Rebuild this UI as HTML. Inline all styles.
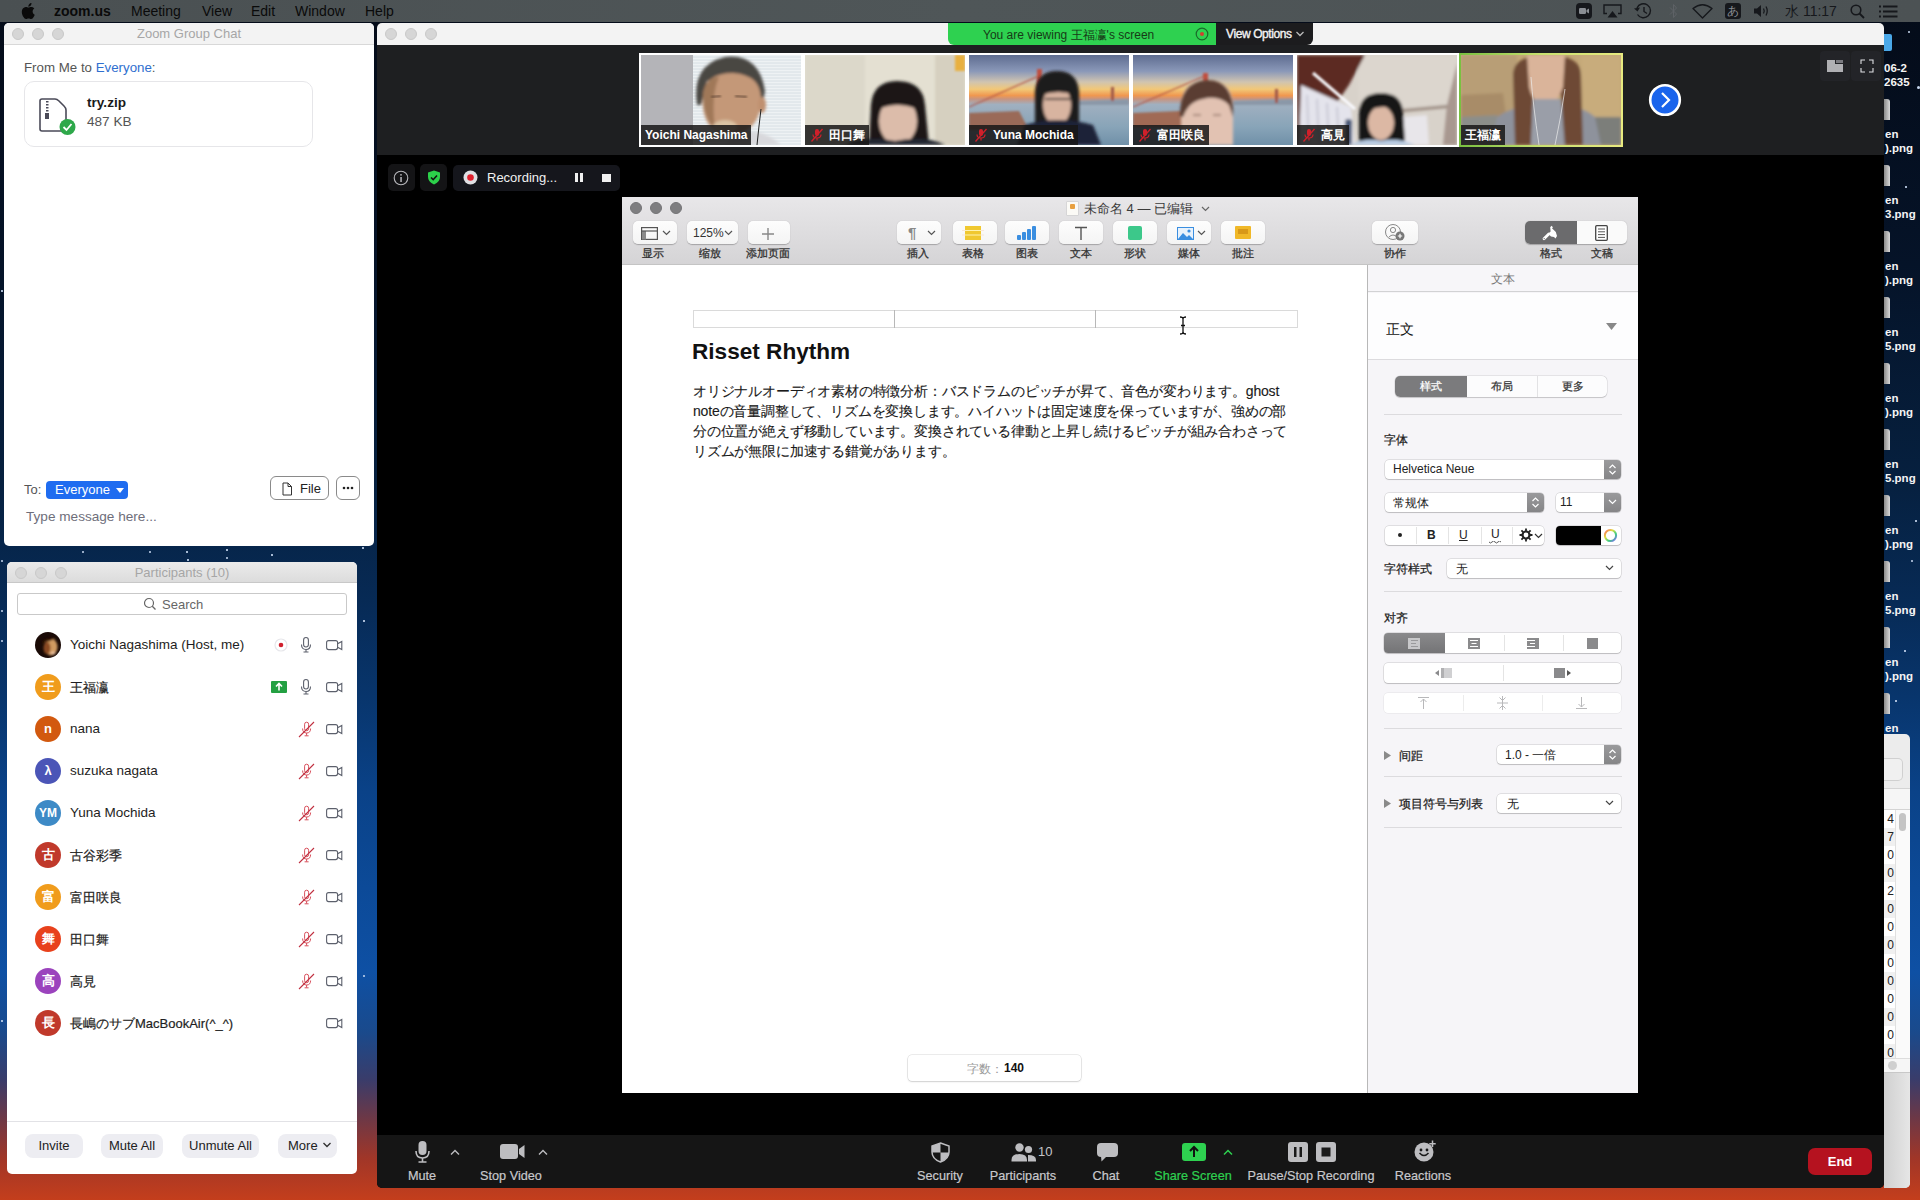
<!DOCTYPE html>
<html lang="ja">
<head>
<meta charset="utf-8">
<style>
*{box-sizing:border-box;margin:0;padding:0}
html,body{width:1920px;height:1200px;overflow:hidden}
body{position:relative;font-family:"Liberation Sans",sans-serif;background:#0a1e3c}
.abs{position:absolute}
#wall{position:absolute;left:0;top:0;width:1920px;height:1200px;
 background:linear-gradient(180deg,#040b18 0%,#051328 22%,#06203f 40%,#072a55 50%,#08356c 58%,#0a4288 66%,#0c4a98 74%,#0e50a4 81%,#1a4a8c 86%,#3a3c6a 90%,#6a3848 93%,#a03628 96.5%,#c43e1c 100%)}
#menubar{position:absolute;left:0;top:0;width:1920px;height:22px;background:linear-gradient(90deg,#4a5052,#4f5658 50%,#4c5254);color:#0a0a0a;font-size:14px}
#menubar span{position:absolute;top:3px}
.win{position:absolute;background:#fff;border-radius:5px;overflow:hidden}
.tl{position:absolute;width:12px;height:12px;border-radius:50%;background:#d6d6d6;border:0.5px solid #c8c8c8}
.ttl{position:absolute;left:0;right:0;text-align:center;color:#a6a6a6;font-size:13px}
.pbtn{height:24px;background:#ededf2;border-radius:8px;font-size:13px;color:#222;text-align:center;line-height:24px}
.av{position:absolute;left:28px;width:26px;height:26px;border-radius:50%;color:#fff;text-align:center;line-height:26px;font-size:13px;font-weight:bold}
.pn{position:absolute;left:63px;font-size:13.5px;color:#1e1e22}
.th{position:absolute;top:55px;width:160px;height:90px;overflow:hidden}
.th .lb{position:absolute;left:0;bottom:0;height:20px;background:rgba(24,22,22,0.85);color:#fff;font-size:12px;line-height:20px;padding:0 4px 0 4px;font-weight:bold;white-space:nowrap}
.th .sh{position:absolute;border-radius:50%}
.mm{display:inline-block;width:14px;height:14px;vertical-align:-3px;margin-right:5px;margin-left:1px}
.tb{position:absolute;color:#c8c8cc;font-size:12.7px;text-align:center;white-space:nowrap;-webkit-text-stroke:0.2px currentColor}
.pb{position:absolute;top:221px;height:23px;background:linear-gradient(#fdfdfd,#f4f4f4);border-radius:5px;box-shadow:0 0.5px 1px rgba(0,0,0,0.25)}
.pl{position:absolute;top:246px;font-size:11px;color:#333;text-align:center;width:60px;-webkit-text-stroke:0.3px #333}
.sep{position:absolute;left:1384px;width:238px;height:1px;background:#dcdbde}
.sl{position:absolute;font-size:12px;color:#1e1e1e;-webkit-text-stroke:0.25px #1e1e1e}
.pop{position:absolute;background:#fff;border-radius:4px;box-shadow:0 0 0 0.5px rgba(0,0,0,0.18),0 1px 1px rgba(0,0,0,0.15)}
.stp{position:absolute;top:0;right:0;width:17px;height:100%;background:linear-gradient(#9a9a9c,#858587);border-radius:0 4px 4px 0}
</style>
</head>
<body>
<div id="wall"></div>
<div class="abs" style="left:82px;top:551px;width:2px;height:2px;background:#c8d8f0;border-radius:50%"></div><div class="abs" style="left:149px;top:551px;width:2px;height:2px;background:#c8d8f0;border-radius:50%"></div><div class="abs" style="left:186px;top:551px;width:1.5px;height:1.5px;background:#c8d8f0;border-radius:50%"></div><div class="abs" style="left:226px;top:549px;width:1.5px;height:1.5px;background:#c8d8f0;border-radius:50%"></div><div class="abs" style="left:271px;top:554px;width:1.5px;height:1.5px;background:#c8d8f0;border-radius:50%"></div><div class="abs" style="left:187px;top:559px;width:1.5px;height:1.5px;background:#c8d8f0;border-radius:50%"></div><div class="abs" style="left:226px;top:557px;width:2px;height:2px;background:#c8d8f0;border-radius:50%"></div><div class="abs" style="left:362px;top:547px;width:1.5px;height:1.5px;background:#c8d8f0;border-radius:50%"></div><div class="abs" style="left:1px;top:290px;width:1.5px;height:1.5px;background:#c8d8f0;border-radius:50%"></div><div class="abs" style="left:1px;top:560px;width:2px;height:2px;background:#c8d8f0;border-radius:50%"></div><div class="abs" style="left:1px;top:610px;width:2px;height:2px;background:#c8d8f0;border-radius:50%"></div><div class="abs" style="left:1px;top:640px;width:2px;height:2px;background:#c8d8f0;border-radius:50%"></div><div class="abs" style="left:1908px;top:31px;width:2px;height:2px;background:#c8d8f0;border-radius:50%"></div><div class="abs" style="left:1917px;top:86px;width:3px;height:3px;background:#c8d8f0;border-radius:50%"></div><div class="abs" style="left:1905px;top:186px;width:1.5px;height:1.5px;background:#c8d8f0;border-radius:50%"></div><div class="abs" style="left:1915px;top:520px;width:1.5px;height:1.5px;background:#c8d8f0;border-radius:50%"></div><div class="abs" style="left:1911px;top:560px;width:2px;height:2px;background:#c8d8f0;border-radius:50%"></div><div class="abs" style="left:1913px;top:610px;width:1.5px;height:1.5px;background:#c8d8f0;border-radius:50%"></div><div class="abs" style="left:1904px;top:650px;width:1.5px;height:1.5px;background:#c8d8f0;border-radius:50%"></div><div class="abs" style="left:1895px;top:700px;width:1.5px;height:1.5px;background:#c8d8f0;border-radius:50%"></div><div class="abs" style="left:363px;top:975px;width:2px;height:2px;background:#c8d8f0;border-radius:50%"></div><div class="abs" style="left:363px;top:620px;width:1.5px;height:1.5px;background:#c8d8f0;border-radius:50%"></div><div class="abs" style="left:1px;top:1020px;width:1.5px;height:1.5px;background:#c8d8f0;border-radius:50%"></div>
<svg width="0" height="0" style="position:absolute"><defs>
<filter id="bl" x="-20%" y="-20%" width="140%" height="140%"><feGaussianBlur stdDeviation="1.6"/></filter>
<filter id="bl2" x="-20%" y="-20%" width="140%" height="140%"><feGaussianBlur stdDeviation="0.8"/></filter>
<linearGradient id="sky" x1="0" y1="0" x2="0" y2="1"><stop offset="0" stop-color="#5e6c90"/><stop offset="0.18" stop-color="#8a98b8"/><stop offset="0.3" stop-color="#d0c4b0"/><stop offset="0.38" stop-color="#f2c878"/><stop offset="0.45" stop-color="#f09850"/><stop offset="0.49" stop-color="#c89480"/><stop offset="0.55" stop-color="#a0b0c0"/><stop offset="0.8" stop-color="#88a4b8"/><stop offset="1" stop-color="#7090a8"/></linearGradient>
</defs></svg>


<div class="abs" style="left:1884px;top:34px;width:8px;height:17px;background:#4aa8e8;border-radius:0 2px 2px 0"></div>
<div class="abs" style="left:1884px;top:61px;font-size:11.5px;font-weight:bold;color:#f4f4f4;line-height:14px;white-space:nowrap">06-2<br>2635</div>
<div class="abs" style="left:1884px;top:99px;width:6px;height:21px;background:linear-gradient(90deg,#8a8a8a,#d8d8d8);border-radius:0 3px 0 0"></div>
<div class="abs" style="left:1885px;top:127px;font-size:11.5px;font-weight:bold;color:#f4f4f4;line-height:14px;white-space:nowrap">en<br>).png</div>
<div class="abs" style="left:1884px;top:165px;width:6px;height:21px;background:linear-gradient(90deg,#8a8a8a,#d8d8d8);border-radius:0 3px 0 0"></div>
<div class="abs" style="left:1885px;top:193px;font-size:11.5px;font-weight:bold;color:#f4f4f4;line-height:14px;white-space:nowrap">en<br>3.png</div>
<div class="abs" style="left:1884px;top:231px;width:6px;height:21px;background:linear-gradient(90deg,#8a8a8a,#d8d8d8);border-radius:0 3px 0 0"></div>
<div class="abs" style="left:1885px;top:259px;font-size:11.5px;font-weight:bold;color:#f4f4f4;line-height:14px;white-space:nowrap">en<br>).png</div>
<div class="abs" style="left:1884px;top:297px;width:6px;height:21px;background:linear-gradient(90deg,#8a8a8a,#d8d8d8);border-radius:0 3px 0 0"></div>
<div class="abs" style="left:1885px;top:325px;font-size:11.5px;font-weight:bold;color:#f4f4f4;line-height:14px;white-space:nowrap">en<br>5.png</div>
<div class="abs" style="left:1884px;top:363px;width:6px;height:21px;background:linear-gradient(90deg,#8a8a8a,#d8d8d8);border-radius:0 3px 0 0"></div>
<div class="abs" style="left:1885px;top:391px;font-size:11.5px;font-weight:bold;color:#f4f4f4;line-height:14px;white-space:nowrap">en<br>).png</div>
<div class="abs" style="left:1884px;top:429px;width:6px;height:21px;background:linear-gradient(90deg,#8a8a8a,#d8d8d8);border-radius:0 3px 0 0"></div>
<div class="abs" style="left:1885px;top:457px;font-size:11.5px;font-weight:bold;color:#f4f4f4;line-height:14px;white-space:nowrap">en<br>5.png</div>
<div class="abs" style="left:1884px;top:495px;width:6px;height:21px;background:linear-gradient(90deg,#8a8a8a,#d8d8d8);border-radius:0 3px 0 0"></div>
<div class="abs" style="left:1885px;top:523px;font-size:11.5px;font-weight:bold;color:#f4f4f4;line-height:14px;white-space:nowrap">en<br>).png</div>
<div class="abs" style="left:1884px;top:561px;width:6px;height:21px;background:linear-gradient(90deg,#8a8a8a,#d8d8d8);border-radius:0 3px 0 0"></div>
<div class="abs" style="left:1885px;top:589px;font-size:11.5px;font-weight:bold;color:#f4f4f4;line-height:14px;white-space:nowrap">en<br>5.png</div>
<div class="abs" style="left:1884px;top:627px;width:6px;height:21px;background:linear-gradient(90deg,#8a8a8a,#d8d8d8);border-radius:0 3px 0 0"></div>
<div class="abs" style="left:1885px;top:655px;font-size:11.5px;font-weight:bold;color:#f4f4f4;line-height:14px;white-space:nowrap">en<br>).png</div>
<div class="abs" style="left:1884px;top:693px;width:6px;height:21px;background:linear-gradient(90deg,#8a8a8a,#d8d8d8);border-radius:0 3px 0 0"></div>
<div class="abs" style="left:1885px;top:721px;font-size:11.5px;font-weight:bold;color:#f4f4f4;line-height:14px;white-space:nowrap">en<br></div>
<div class="abs" style="left:1884px;top:734px;width:26px;height:454px;background:#ececec;border-radius:0 5px 5px 0;overflow:hidden"><div class="abs" style="left:0;top:24px;width:19px;height:23px;border:1px solid #d0d0d0;border-left:none;border-radius:0 5px 5px 0;background:#f0f0f0"></div><div class="abs" style="left:0;top:54px;width:26px;height:1px;background:#d4d4d4"></div><div class="abs" style="left:0;top:55px;width:26px;height:21px;background:#f6f6f6;border-bottom:1px solid #d4d4d4"></div><div class="abs" style="left:0;top:76px;width:11px;height:18px;background:#fff;font-size:12px;color:#222;line-height:18px;text-align:right;padding-right:1px">4</div><div class="abs" style="left:0;top:94px;width:11px;height:18px;background:#f0f0f0;font-size:12px;color:#222;line-height:18px;text-align:right;padding-right:1px">7</div><div class="abs" style="left:0;top:112px;width:11px;height:18px;background:#fff;font-size:12px;color:#222;line-height:18px;text-align:right;padding-right:1px">0</div><div class="abs" style="left:0;top:130px;width:11px;height:18px;background:#f0f0f0;font-size:12px;color:#222;line-height:18px;text-align:right;padding-right:1px">0</div><div class="abs" style="left:0;top:148px;width:11px;height:18px;background:#fff;font-size:12px;color:#222;line-height:18px;text-align:right;padding-right:1px">2</div><div class="abs" style="left:0;top:166px;width:11px;height:18px;background:#f0f0f0;font-size:12px;color:#222;line-height:18px;text-align:right;padding-right:1px">0</div><div class="abs" style="left:0;top:184px;width:11px;height:18px;background:#fff;font-size:12px;color:#222;line-height:18px;text-align:right;padding-right:1px">0</div><div class="abs" style="left:0;top:202px;width:11px;height:18px;background:#f0f0f0;font-size:12px;color:#222;line-height:18px;text-align:right;padding-right:1px">0</div><div class="abs" style="left:0;top:220px;width:11px;height:18px;background:#fff;font-size:12px;color:#222;line-height:18px;text-align:right;padding-right:1px">0</div><div class="abs" style="left:0;top:238px;width:11px;height:18px;background:#f0f0f0;font-size:12px;color:#222;line-height:18px;text-align:right;padding-right:1px">0</div><div class="abs" style="left:0;top:256px;width:11px;height:18px;background:#fff;font-size:12px;color:#222;line-height:18px;text-align:right;padding-right:1px">0</div><div class="abs" style="left:0;top:274px;width:11px;height:18px;background:#f0f0f0;font-size:12px;color:#222;line-height:18px;text-align:right;padding-right:1px">0</div><div class="abs" style="left:0;top:292px;width:11px;height:18px;background:#fff;font-size:12px;color:#222;line-height:18px;text-align:right;padding-right:1px">0</div><div class="abs" style="left:0;top:310px;width:11px;height:18px;background:#f0f0f0;font-size:12px;color:#222;line-height:18px;text-align:right;padding-right:1px">0</div><div class="abs" style="left:11px;top:76px;width:15px;height:248px;background:#fafafa;border-left:1px solid #e0e0e0"></div><div class="abs" style="left:15px;top:79px;width:7px;height:18px;background:#c4c4c4;border-radius:4px"></div><div class="abs" style="left:0;top:324px;width:26px;height:15px;background:#f6f6f6;border-top:1px solid #ddd;border-bottom:1px solid #c8c8c8"></div><div class="abs" style="left:4px;top:327px;width:9px;height:9px;border-radius:50%;background:#cfcfcf"></div><div class="abs" style="left:0;top:339px;width:26px;height:115px;background:linear-gradient(90deg,#d0d0d0,#e6e6e6)"></div></div>

<!-- MENUBAR -->
<div id="menubar">
 <svg class="abs" style="left:21px;top:3px" width="14" height="16" viewBox="0 0 14 16"><path d="M11.6 8.5c0-2 1.6-2.9 1.7-3-0.9-1.4-2.4-1.6-2.9-1.6-1.2-0.1-2.4 0.7-3 0.7-0.6 0-1.6-0.7-2.6-0.7C3.5 4 2.2 4.8 1.5 6c-1.4 2.4-0.4 6 1 8 0.7 1 1.5 2 2.5 2 1 0 1.400-0.6 2.600-0.6 1.2 0 1.500 0.6 2.600 0.6 1.1 0 1.800-1 2.400-2 0.8-1.100 1.100-2.200 1.100-2.300-0.100 0-2.100-0.800-2.100-3.200zM9.700 2.600c0.500-0.700 0.900-1.600 0.800-2.600-0.800 0-1.800 0.500-2.300 1.200-0.500 0.600-1 1.600-0.800 2.500 0.900 0.100 1.800-0.400 2.300-1.100z" fill="#0a0a0a"/></svg>
 <span style="left:54px;font-weight:bold">zoom.us</span>
 <span style="left:131px">Meeting</span>
 <span style="left:202px">View</span>
 <span style="left:251px">Edit</span>
 <span style="left:295px">Window</span>
 <span style="left:365px">Help</span>

<svg class="abs" style="left:1576px;top:3px" width="16" height="16" viewBox="0 0 16 16"><rect x="0" y="0" width="16" height="16" rx="4" fill="#16181c"/><rect x="3" y="5" width="7" height="6" rx="1.2" fill="#8a8e94"/><path d="M10.5 7 L13 5.5 L13 10.5 L10.5 9 Z" fill="#8a8e94"/></svg>
<svg class="abs" style="left:1603px;top:4px" width="19" height="14" viewBox="0 0 19 14"><path d="M4 9.5 L1 9.5 L1 1 L18 1 L18 9.5 L15 9.5" fill="none" stroke="#16181c" stroke-width="1.4"/><path d="M9.5 7 L14.5 13.5 L4.5 13.5 Z" fill="#16181c"/></svg>
<svg class="abs" style="left:1633px;top:3px" width="19" height="16" viewBox="0 0 19 16"><path d="M4 5 A7 7 0 1 1 4.5 11.5" fill="none" stroke="#16181c" stroke-width="1.4"/><path d="M1 5.5 L4.5 8.5 L7 4.5 Z" fill="#16181c"/><path d="M11 4 L11 8.5 L14 10.5" fill="none" stroke="#16181c" stroke-width="1.4"/></svg>
<svg class="abs" style="left:1669px;top:3px" width="9" height="16" viewBox="0 0 9 16"><path d="M1 4.5 L7.5 11 L4.5 14.5 L4.5 1.5 L7.5 5 L1 11.5" fill="none" stroke="#5e6266" stroke-width="1"/></svg>
<svg class="abs" style="left:1692px;top:4px" width="21" height="15" viewBox="0 0 21 15"><path d="M1 4.5 Q10.5 -3 20 4.5 L10.5 14 Z" fill="none" stroke="#16181c" stroke-width="1.4" stroke-linejoin="round"/></svg>
<div class="abs" style="left:1725px;top:3px;width:16px;height:16px;background:#16181c;border-radius:3px;color:#8a8e94;font-size:12px;line-height:16px;text-align:center">あ</div>
<svg class="abs" style="left:1753px;top:4px" width="17" height="14" viewBox="0 0 17 14"><path d="M1 4.5 L4 4.5 L8 1 L8 13 L4 9.5 L1 9.5 Z" fill="#16181c"/><path d="M10.5 4.5 Q12 7 10.5 9.5 M13 2.5 Q15.5 7 13 11.5" fill="none" stroke="#16181c" stroke-width="1.3"/></svg>
<div class="abs" style="left:1785px;top:3px;font-size:14px;color:#16181c">水 11:17</div>
<svg class="abs" style="left:1850px;top:4px" width="15" height="15" viewBox="0 0 15 15"><circle cx="6" cy="6" r="4.8" fill="none" stroke="#16181c" stroke-width="1.6"/><path d="M9.5 9.5 L14 14" stroke="#16181c" stroke-width="1.8"/></svg>
<svg class="abs" style="left:1879px;top:5px" width="19" height="13" viewBox="0 0 19 13"><path d="M0 1.5 L2 1.5 M4 1.5 L18.5 1.5 M0 6.5 L2 6.5 M4 6.5 L18.5 6.5 M0 11.5 L2 11.5 M4 11.5 L18.5 11.5" stroke="#16181c" stroke-width="2"/></svg>
</div>

<!-- CHAT WINDOW -->
<div class="win" id="chat" style="left:4px;top:23px;width:370px;height:523px">
 <div class="abs" style="left:0;top:0;width:370px;height:22px;background:#f3f3f3;border-bottom:1px solid #d8d8d8"></div>
 <div class="tl" style="left:8px;top:5px"></div>
 <div class="tl" style="left:28px;top:5px"></div>
 <div class="tl" style="left:48px;top:5px"></div>
 <div class="ttl" style="top:3px">Zoom Group Chat</div>
 <div class="abs" style="left:20px;top:37px;font-size:13.3px;color:#555">From Me to <span style="color:#2f6fcf">Everyone</span>:</div>
 <div class="abs" style="left:20px;top:58px;width:289px;height:66px;border:1px solid #e6e6e9;border-radius:10px"></div>
 <svg class="abs" style="left:30px;top:73px" width="44" height="40" viewBox="0 0 44 40">
  <path d="M6 5 Q6 3 8 3 L21 3 Q23 3 25 5 L30 10 Q32 12 32 14 L32 33 Q32 35 30 35 L8 35 Q6 35 6 33 Z" fill="#fff" stroke="#4a4a58" stroke-width="1.6"/>
  <rect x="12" y="5" width="2.5" height="1.5" fill="#4a4a58"/><rect x="12" y="8" width="2.5" height="1.5" fill="#4a4a58"/><rect x="12" y="11" width="2.5" height="1.5" fill="#4a4a58"/><rect x="12" y="14" width="2.5" height="1.5" fill="#4a4a58"/>
  <rect x="11" y="17" width="4" height="6" fill="#4a4a58"/>
  <circle cx="33.5" cy="31" r="8" fill="#2ea84a"/>
  <path d="M29.5 31 L32.5 34 L37.5 28" fill="none" stroke="#fff" stroke-width="1.8"/>
 </svg>
 <div class="abs" style="left:83px;top:72px;font-size:13.6px;font-weight:bold;color:#1a1a1a">try.zip</div>
 <div class="abs" style="left:83px;top:91px;font-size:13.6px;color:#555">487 KB</div>
 <div class="abs" style="left:20px;top:459px;font-size:13px;color:#555">To:</div>
 <div class="abs" style="left:42px;top:458px;width:82px;height:18px;background:#1f6cf0;border-radius:4px;color:#fff;font-size:13px;padding-left:9px;line-height:18px">Everyone</div><svg class="abs" style="left:112px;top:465px" width="8" height="5" viewBox="0 0 8 5"><path d="M0 0 L8 0 L4 5 Z" fill="#fff"/></svg>
 <div class="abs" style="left:266px;top:453px;width:59px;height:24px;border:1px solid #8a8a8a;border-radius:6px"></div>
 <svg class="abs" style="left:276px;top:459px" width="14" height="14" viewBox="0 0 14 14"><path d="M3 1 L8 1 L11.5 4.5 L11.5 13 L3 13 Z M8 1 L8 4.5 L11.5 4.5" fill="none" stroke="#333" stroke-width="1"/></svg>
 <div class="abs" style="left:296px;top:458px;font-size:13px;color:#222">File</div>
 <div class="abs" style="left:332px;top:453px;width:24px;height:24px;border:1px solid #8a8a8a;border-radius:6px"></div><svg class="abs" style="left:338px;top:463px" width="12" height="4" viewBox="0 0 12 4"><circle cx="2" cy="2" r="1.3" fill="#222"/><circle cx="6" cy="2" r="1.3" fill="#222"/><circle cx="10" cy="2" r="1.3" fill="#222"/></svg>
 <div class="abs" style="left:22px;top:486px;font-size:13.6px;color:#6e6e7a">Type message here...</div>
</div>

<!-- PARTICIPANTS WINDOW -->
<div class="win" id="parts" style="left:7px;top:562px;width:350px;height:612px">
 <div class="abs" style="left:0;top:0;width:350px;height:21px;background:linear-gradient(#ebebeb,#dcdcdc);border-bottom:1px solid #c8c8c8"></div>
 <div class="tl" style="left:8px;top:5px"></div>
 <div class="tl" style="left:28px;top:5px"></div>
 <div class="tl" style="left:48px;top:5px"></div>
 <div class="ttl" style="top:3px">Participants (10)</div>
 <div class="abs" style="left:10px;top:31px;width:330px;height:22px;border:1px solid #c9c9c9;border-radius:3px"></div>
 <svg class="abs" style="left:136px;top:35px" width="14" height="14" viewBox="0 0 14 14"><circle cx="6" cy="6" r="4.5" fill="none" stroke="#666" stroke-width="1.2"/><path d="M9.3 9.3 L12.5 12.5" stroke="#666" stroke-width="1.3"/></svg>
 <div class="abs" style="left:155px;top:35px;font-size:13px;color:#666">Search</div>
 <svg class="abs" style="left:28px;top:70px" width="26" height="26" viewBox="0 0 26 26"><defs><clipPath id="avc"><circle cx="13" cy="13" r="13"/></clipPath></defs><g clip-path="url(#avc)"><rect width="26" height="26" fill="#1a0a06"/><g filter="url(#bl2)"><ellipse cx="16" cy="15" rx="6.5" ry="8.5" fill="#d09a60"/><ellipse cx="12" cy="16" rx="3.5" ry="6" fill="#8a4a20"/><path d="M6 11 Q10 4 21 6 Q16 9 10 10 Z" fill="#2a0e06"/><ellipse cx="18" cy="21" rx="2.5" ry="1.6" fill="#e8c0a0"/></g></g></svg>
<div class="pn" style="top:75px">Yoichi Nagashima (Host, me)</div>
<svg class="abs" style="left:267px;top:76px" width="14" height="14" viewBox="0 0 14 14"><circle cx="7" cy="7" r="6" fill="none" stroke="#e6e6ea" stroke-width="1.2"/><circle cx="7" cy="7" r="2.3" fill="#d0202e"/></svg>
<svg class="abs" style="left:292px;top:74px" width="14" height="18" viewBox="0 0 14 18"><rect x="4.6" y="1.5" width="4.8" height="9.5" rx="2.4" fill="none" stroke="#5c606c" stroke-width="1.1"/><path d="M2.5 8.5 Q2.5 13.5 7 13.5 Q11.5 13.5 11.5 8.5 M7 13.5 L7 16 M4.5 16 L9.5 16" fill="none" stroke="#5c606c" stroke-width="1.1"/></svg>
<svg class="abs" style="left:319px;top:78px" width="17" height="11" viewBox="0 0 17 11"><rect x="0.6" y="0.6" width="11" height="9" rx="2" fill="none" stroke="#5c606c" stroke-width="1.1"/><path d="M11.6 3.8 L15.8 1.5 L15.8 9.5 L11.6 7.2" fill="none" stroke="#5c606c" stroke-width="1.1"/></svg>
<div class="av" style="top:112px;background:#f09c1c;font-size:13px">王</div>
<div class="pn" style="top:117px;font-size:13px;-webkit-text-stroke:0.2px #1e1e22">王福瀛</div>
<svg class="abs" style="left:264px;top:119px" width="16" height="12" viewBox="0 0 16 12"><rect width="16" height="12" rx="1" fill="#23a042"/><path d="M8 2.5 L8 9.5 M5 5.5 L8 2.5 L11 5.5" fill="none" stroke="#fff" stroke-width="1.6"/></svg>
<svg class="abs" style="left:292px;top:116px" width="14" height="18" viewBox="0 0 14 18"><rect x="4.6" y="1.5" width="4.8" height="9.5" rx="2.4" fill="none" stroke="#5c606c" stroke-width="1.1"/><path d="M2.5 8.5 Q2.5 13.5 7 13.5 Q11.5 13.5 11.5 8.5 M7 13.5 L7 16 M4.5 16 L9.5 16" fill="none" stroke="#5c606c" stroke-width="1.1"/></svg>
<svg class="abs" style="left:319px;top:120px" width="17" height="11" viewBox="0 0 17 11"><rect x="0.6" y="0.6" width="11" height="9" rx="2" fill="none" stroke="#5c606c" stroke-width="1.1"/><path d="M11.6 3.8 L15.8 1.5 L15.8 9.5 L11.6 7.2" fill="none" stroke="#5c606c" stroke-width="1.1"/></svg>
<div class="av" style="top:154px;background:#d2590f;font-size:13px">n</div>
<div class="pn" style="top:159px">nana</div>
<svg class="abs" style="left:291px;top:159px" width="17" height="17" viewBox="0 0 17 17"><rect x="6.6" y="1.2" width="4" height="8.5" rx="2" fill="none" stroke="#d8505c" stroke-width="1"/><path d="M4.6 7.5 Q4.6 12 8.6 12 Q12.6 12 12.6 7.5 M8.6 12 L8.6 14.5 M6.6 14.8 L10.6 14.8" fill="none" stroke="#d8505c" stroke-width="1"/><path d="M1 16 L16 1" stroke="#c03040" stroke-width="1.1"/></svg>
<svg class="abs" style="left:319px;top:162px" width="17" height="11" viewBox="0 0 17 11"><rect x="0.6" y="0.6" width="11" height="9" rx="2" fill="none" stroke="#5c606c" stroke-width="1.1"/><path d="M11.6 3.8 L15.8 1.5 L15.8 9.5 L11.6 7.2" fill="none" stroke="#5c606c" stroke-width="1.1"/></svg>
<div class="av" style="top:196px;background:#4b55b7;font-size:13px">λ</div>
<div class="pn" style="top:201px">suzuka nagata</div>
<svg class="abs" style="left:291px;top:201px" width="17" height="17" viewBox="0 0 17 17"><rect x="6.6" y="1.2" width="4" height="8.5" rx="2" fill="none" stroke="#d8505c" stroke-width="1"/><path d="M4.6 7.5 Q4.6 12 8.6 12 Q12.6 12 12.6 7.5 M8.6 12 L8.6 14.5 M6.6 14.8 L10.6 14.8" fill="none" stroke="#d8505c" stroke-width="1"/><path d="M1 16 L16 1" stroke="#c03040" stroke-width="1.1"/></svg>
<svg class="abs" style="left:319px;top:204px" width="17" height="11" viewBox="0 0 17 11"><rect x="0.6" y="0.6" width="11" height="9" rx="2" fill="none" stroke="#5c606c" stroke-width="1.1"/><path d="M11.6 3.8 L15.8 1.5 L15.8 9.5 L11.6 7.2" fill="none" stroke="#5c606c" stroke-width="1.1"/></svg>
<div class="av" style="top:238px;background:#3d8ac6;font-size:12px">YM</div>
<div class="pn" style="top:243px">Yuna Mochida</div>
<svg class="abs" style="left:291px;top:243px" width="17" height="17" viewBox="0 0 17 17"><rect x="6.6" y="1.2" width="4" height="8.5" rx="2" fill="none" stroke="#d8505c" stroke-width="1"/><path d="M4.6 7.5 Q4.6 12 8.6 12 Q12.6 12 12.6 7.5 M8.6 12 L8.6 14.5 M6.6 14.8 L10.6 14.8" fill="none" stroke="#d8505c" stroke-width="1"/><path d="M1 16 L16 1" stroke="#c03040" stroke-width="1.1"/></svg>
<svg class="abs" style="left:319px;top:246px" width="17" height="11" viewBox="0 0 17 11"><rect x="0.6" y="0.6" width="11" height="9" rx="2" fill="none" stroke="#5c606c" stroke-width="1.1"/><path d="M11.6 3.8 L15.8 1.5 L15.8 9.5 L11.6 7.2" fill="none" stroke="#5c606c" stroke-width="1.1"/></svg>
<div class="av" style="top:280px;background:#c0392b;font-size:13px">古</div>
<div class="pn" style="top:285px;font-size:13px;-webkit-text-stroke:0.2px #1e1e22">古谷彩季</div>
<svg class="abs" style="left:291px;top:285px" width="17" height="17" viewBox="0 0 17 17"><rect x="6.6" y="1.2" width="4" height="8.5" rx="2" fill="none" stroke="#d8505c" stroke-width="1"/><path d="M4.6 7.5 Q4.6 12 8.6 12 Q12.6 12 12.6 7.5 M8.6 12 L8.6 14.5 M6.6 14.8 L10.6 14.8" fill="none" stroke="#d8505c" stroke-width="1"/><path d="M1 16 L16 1" stroke="#c03040" stroke-width="1.1"/></svg>
<svg class="abs" style="left:319px;top:288px" width="17" height="11" viewBox="0 0 17 11"><rect x="0.6" y="0.6" width="11" height="9" rx="2" fill="none" stroke="#5c606c" stroke-width="1.1"/><path d="M11.6 3.8 L15.8 1.5 L15.8 9.5 L11.6 7.2" fill="none" stroke="#5c606c" stroke-width="1.1"/></svg>
<div class="av" style="top:322px;background:#f09c1c;font-size:13px">富</div>
<div class="pn" style="top:327px;font-size:13px;-webkit-text-stroke:0.2px #1e1e22">富田咲良</div>
<svg class="abs" style="left:291px;top:327px" width="17" height="17" viewBox="0 0 17 17"><rect x="6.6" y="1.2" width="4" height="8.5" rx="2" fill="none" stroke="#d8505c" stroke-width="1"/><path d="M4.6 7.5 Q4.6 12 8.6 12 Q12.6 12 12.6 7.5 M8.6 12 L8.6 14.5 M6.6 14.8 L10.6 14.8" fill="none" stroke="#d8505c" stroke-width="1"/><path d="M1 16 L16 1" stroke="#c03040" stroke-width="1.1"/></svg>
<svg class="abs" style="left:319px;top:330px" width="17" height="11" viewBox="0 0 17 11"><rect x="0.6" y="0.6" width="11" height="9" rx="2" fill="none" stroke="#5c606c" stroke-width="1.1"/><path d="M11.6 3.8 L15.8 1.5 L15.8 9.5 L11.6 7.2" fill="none" stroke="#5c606c" stroke-width="1.1"/></svg>
<div class="av" style="top:364px;background:#e8411c;font-size:13px">舞</div>
<div class="pn" style="top:369px;font-size:13px;-webkit-text-stroke:0.2px #1e1e22">田口舞</div>
<svg class="abs" style="left:291px;top:369px" width="17" height="17" viewBox="0 0 17 17"><rect x="6.6" y="1.2" width="4" height="8.5" rx="2" fill="none" stroke="#d8505c" stroke-width="1"/><path d="M4.6 7.5 Q4.6 12 8.6 12 Q12.6 12 12.6 7.5 M8.6 12 L8.6 14.5 M6.6 14.8 L10.6 14.8" fill="none" stroke="#d8505c" stroke-width="1"/><path d="M1 16 L16 1" stroke="#c03040" stroke-width="1.1"/></svg>
<svg class="abs" style="left:319px;top:372px" width="17" height="11" viewBox="0 0 17 11"><rect x="0.6" y="0.6" width="11" height="9" rx="2" fill="none" stroke="#5c606c" stroke-width="1.1"/><path d="M11.6 3.8 L15.8 1.5 L15.8 9.5 L11.6 7.2" fill="none" stroke="#5c606c" stroke-width="1.1"/></svg>
<div class="av" style="top:406px;background:#9b43bd;font-size:13px">高</div>
<div class="pn" style="top:411px;font-size:13px;-webkit-text-stroke:0.2px #1e1e22">高見</div>
<svg class="abs" style="left:291px;top:411px" width="17" height="17" viewBox="0 0 17 17"><rect x="6.6" y="1.2" width="4" height="8.5" rx="2" fill="none" stroke="#d8505c" stroke-width="1"/><path d="M4.6 7.5 Q4.6 12 8.6 12 Q12.6 12 12.6 7.5 M8.6 12 L8.6 14.5 M6.6 14.8 L10.6 14.8" fill="none" stroke="#d8505c" stroke-width="1"/><path d="M1 16 L16 1" stroke="#c03040" stroke-width="1.1"/></svg>
<svg class="abs" style="left:319px;top:414px" width="17" height="11" viewBox="0 0 17 11"><rect x="0.6" y="0.6" width="11" height="9" rx="2" fill="none" stroke="#5c606c" stroke-width="1.1"/><path d="M11.6 3.8 L15.8 1.5 L15.8 9.5 L11.6 7.2" fill="none" stroke="#5c606c" stroke-width="1.1"/></svg>
<div class="av" style="top:448px;background:#c0392b;font-size:13px">長</div>
<div class="pn" style="top:453px;font-size:13px;-webkit-text-stroke:0.2px #1e1e22">長嶋のサブMacBookAir(^_^)</div>
<svg class="abs" style="left:319px;top:456px" width="17" height="11" viewBox="0 0 17 11"><rect x="0.6" y="0.6" width="11" height="9" rx="2" fill="none" stroke="#5c606c" stroke-width="1.1"/><path d="M11.6 3.8 L15.8 1.5 L15.8 9.5 L11.6 7.2" fill="none" stroke="#5c606c" stroke-width="1.1"/></svg>
 <div class="abs" style="left:0;top:559px;width:350px;height:1px;background:#e2e2e6"></div>
 <div class="abs pbtn" style="left:18px;top:572px;width:58px">Invite</div>
 <div class="abs pbtn" style="left:94px;top:572px;width:62px">Mute All</div>
 <div class="abs pbtn" style="left:175px;top:572px;width:77px">Unmute All</div>
 <div class="abs pbtn" style="left:271px;top:572px;width:59px;text-align:left;padding-left:10px">More <svg width="10" height="8" viewBox="0 0 10 8" style="position:relative;top:-1px;left:1px"><path d="M1.5 2 L5 5.5 L8.5 2" fill="none" stroke="#333" stroke-width="1.4"/></svg></div>
</div>

<!-- MEETING WINDOW -->
<div class="win" id="meet" style="left:377px;top:23px;width:1507px;height:1165px;background:#000">
 <div class="abs" style="left:0;top:0;width:1507px;height:22px;background:#f3f3f3"></div>
 <div class="tl" style="left:8px;top:5px"></div>
 <div class="tl" style="left:28px;top:5px"></div>
 <div class="tl" style="left:48px;top:5px"></div>
 <div class="abs" style="left:0;top:22px;width:1507px;height:110px;background:#1e1f21"></div>
 <div class="abs" style="left:0;top:1112px;width:1507px;height:53px;background:#151515"></div>
</div>


<div class="abs" style="left:948px;top:23px;width:268px;height:22px;background:#2ed150;border-radius:0 0 0 6px"></div>
<div class="abs" style="left:983px;top:27px;font-size:12px;color:#173a17">You are viewing 王福瀛's screen</div>
<svg class="abs" style="left:1195px;top:27px" width="14" height="14" viewBox="0 0 14 14"><circle cx="7" cy="7" r="5.8" fill="none" stroke="#1a6a2a" stroke-width="1.2"/><circle cx="7" cy="7" r="2" fill="#d04030"/></svg>
<div class="abs" style="left:1216px;top:23px;width:97px;height:22px;background:#1c1c1e;border-radius:0 0 6px 0"></div>
<div class="abs" style="left:1226px;top:27px;font-size:12px;color:#f4f4f4;letter-spacing:-0.4px;-webkit-text-stroke:0.35px #f4f4f4">View Options</div>
<svg class="abs" style="left:1295px;top:30px" width="10" height="8" viewBox="0 0 10 8"><path d="M1.5 2 L5 5.5 L8.5 2" fill="none" stroke="#bbb" stroke-width="1.3"/></svg>

<div class="abs" style="left:639px;top:53px;width:820px;height:94px;background:#fff"></div>
<div class="th" style="left:641px"><svg width="160" height="90" viewBox="0 0 160 90" style="position:absolute;left:0;top:0"><rect width="160" height="90" fill="#eef2f4"/><rect width="52" height="90" fill="#b4b4b8"/>
<g stroke="#d4dce2" stroke-width="0.9"><path d="M52 2 L160 2"/><path d="M52 5 L160 5"/><path d="M52 8 L160 8"/><path d="M52 11 L160 11"/><path d="M52 14 L160 14"/><path d="M52 17 L160 17"/><path d="M52 20 L160 20"/><path d="M52 23 L160 23"/><path d="M52 26 L160 26"/><path d="M52 29 L160 29"/><path d="M52 32 L160 32"/><path d="M52 35 L160 35"/><path d="M52 38 L160 38"/><path d="M52 41 L160 41"/><path d="M52 44 L160 44"/><path d="M52 47 L160 47"/><path d="M52 50 L160 50"/><path d="M52 53 L160 53"/><path d="M52 56 L160 56"/><path d="M52 59 L160 59"/><path d="M52 62 L160 62"/><path d="M52 65 L160 65"/><path d="M52 68 L160 68"/><path d="M52 71 L160 71"/><path d="M52 74 L160 74"/><path d="M52 77 L160 77"/><path d="M52 80 L160 80"/><path d="M52 83 L160 83"/><path d="M52 86 L160 86"/><path d="M52 89 L160 89"/></g>
<g filter="url(#bl)">
<path d="M56 50 Q50 10 84 2 Q118 -2 124 36 L122 48 L114 30 Q96 18 66 26 L60 50 Z" fill="#4a4642"/>
<path d="M62 40 Q64 18 92 18 Q120 20 120 44 Q120 70 100 78 Q80 82 68 70 Q60 58 62 40 Z" fill="#c49878"/>
<path d="M62 40 Q64 22 78 22 Q70 40 74 74 Q62 62 62 40 Z" fill="#a07858"/>
<ellipse cx="121" cy="50" rx="4" ry="8" fill="#c09070"/>
<ellipse cx="84" cy="72" rx="12" ry="7" fill="#dcc4a4"/>
<path d="M96 78 Q120 72 140 90 L84 90 Z" fill="#d8d8dc"/>
</g>
<path d="M120 54 Q118 70 116 90" stroke="#222" stroke-width="1" fill="none"/>
<path d="M70 42 L80 41 M94 41 L106 42" stroke="#5a4030" stroke-width="1.5" filter="url(#bl2)"/>
</svg><div class="lb">Yoichi Nagashima</div></div>
<div class="th" style="left:805px"><svg width="160" height="90" viewBox="0 0 160 90" style="position:absolute;left:0;top:0"><rect width="160" height="90" fill="#e4e0d2"/><rect x="0" width="60" height="90" fill="#dcd8ca" filter="url(#bl)"/><rect x="130" width="30" height="90" fill="#d6d0c0" filter="url(#bl)"/>
<rect x="150" y="0" width="10" height="16" fill="#e8b040" filter="url(#bl2)"/>
<g filter="url(#bl)"><path d="M64 90 L66 50 Q68 26 92 26 Q118 26 120 50 L124 90 Z" fill="#1a1614"/>
<ellipse cx="93" cy="66" rx="19" ry="24" fill="#dcbcaa"/><path d="M70 52 Q72 32 92 32 Q114 32 116 52 L112 54 Q92 46 74 54 Z" fill="#1a1614"/>
<path d="M40 90 Q60 80 90 86 Q120 80 140 90 Z" fill="#222630"/></g></svg><div class="lb"><svg class="mm" viewBox="0 0 14 14"><rect x="5" y="1" width="4" height="7" rx="2" fill="#d0202a"/><path d="M3 6.5 Q3 10 7 10 Q11 10 11 6.5 M7 10 L7 12.5" fill="none" stroke="#d0202a" stroke-width="1.2"/><path d="M1.5 13.5 L12.5 1" stroke="#d0202a" stroke-width="1.3"/></svg>田口舞</div></div>
<div class="th" style="left:969px"><svg width="160" height="90" viewBox="0 0 160 90" style="position:absolute;left:0;top:0"><rect width="160" height="90" fill="url(#sky)"/>
<g filter="url(#bl2)"><path d="M0 58 L50 56 L60 75 L0 75 Z" fill="#9a6a58"/>
<path d="M0 52 L72 20" stroke="#b05040" stroke-width="1.2"/><rect x="68" y="14" width="5" height="40" fill="#c05040"/>
<path d="M110 46 L160 44 L160 50 L110 50 Z" fill="#8a98a8"/><rect x="142" y="32" width="3" height="14" fill="#a05848"/></g>
<g filter="url(#bl)"><path d="M66 70 L66 36 Q68 16 88 16 Q108 16 110 36 L110 70 Z" fill="#1e1a1a"/>
<ellipse cx="88" cy="50" rx="14" ry="20" fill="#d8b4a0"/><path d="M72 40 Q74 22 88 22 Q104 22 106 40 Q90 34 72 40 Z" fill="#1e1a1a"/>
<path d="M76 44 L101 44" stroke="#2a2a2a" stroke-width="2"/>
<path d="M48 90 L56 70 Q88 60 124 70 L132 90 Z" fill="#1c2038"/></g></svg><div class="lb"><svg class="mm" viewBox="0 0 14 14"><rect x="5" y="1" width="4" height="7" rx="2" fill="#d0202a"/><path d="M3 6.5 Q3 10 7 10 Q11 10 11 6.5 M7 10 L7 12.5" fill="none" stroke="#d0202a" stroke-width="1.2"/><path d="M1.5 13.5 L12.5 1" stroke="#d0202a" stroke-width="1.3"/></svg>Yuna Mochida</div></div>
<div class="th" style="left:1133px"><svg width="160" height="90" viewBox="0 0 160 90" style="position:absolute;left:0;top:0"><rect width="160" height="90" fill="url(#sky)"/>
<g filter="url(#bl2)"><path d="M0 58 L48 56 L58 72 L0 72 Z" fill="#a06a54"/>
<path d="M0 52 L74 20" stroke="#b05040" stroke-width="1.2"/><rect x="70" y="18" width="5" height="36" fill="#c05040"/>
<path d="M100 46 L160 44 L160 50 L100 50 Z" fill="#8a98a8"/><rect x="142" y="34" width="3" height="14" fill="#a05848"/></g>
<g filter="url(#bl)"><path d="M48 90 L48 52 Q48 25 74 25 Q100 25 100 52 L100 90 Z" fill="#e2c2b2"/>
<path d="M47 62 Q46 26 74 25 Q102 25 100 62 L96 50 Q86 40 70 44 Q56 46 50 62 Z" fill="#5a3c30"/>
<path d="M60 60 L68 60 M80 60 L88 60" stroke="#6a4a40" stroke-width="1"/></g></svg><div class="lb"><svg class="mm" viewBox="0 0 14 14"><rect x="5" y="1" width="4" height="7" rx="2" fill="#d0202a"/><path d="M3 6.5 Q3 10 7 10 Q11 10 11 6.5 M7 10 L7 12.5" fill="none" stroke="#d0202a" stroke-width="1.2"/><path d="M1.5 13.5 L12.5 1" stroke="#d0202a" stroke-width="1.3"/></svg>富田咲良</div></div>
<div class="th" style="left:1297px"><svg width="160" height="90" viewBox="0 0 160 90" style="position:absolute;left:0;top:0"><rect width="160" height="90" fill="#d8d2ca"/>
<g filter="url(#bl)">
<path d="M60 0 L160 0 L160 8 L150 50 L62 58 Z" fill="#dcd6ce"/>
<path d="M150 50 L160 8 L160 90 L146 90 Z" fill="#a89890"/>
<path d="M62 58 L150 50 L150 53 L62 61 Z" fill="#9a8a80"/>
<path d="M0 0 L68 0 L52 30 L30 62 L12 90 L0 90 Z" fill="#5c2a24"/>
<path d="M4 30 L54 52 L58 90 L2 90 Z" fill="#e4e4ec"/>
<path d="M10 40 L12 90 M20 44 L22 90 M30 48 L32 90 M40 52 L42 90" stroke="#c8c8d4" stroke-width="2"/>
<path d="M104 62 L130 60 L132 90 L104 90 Z" fill="#e8e6ea"/>
<path d="M62 88 L62 56 Q64 38 84 38 Q104 38 106 56 L108 86 Z" fill="#161414"/>
<ellipse cx="84" cy="68" rx="13" ry="17" fill="#dcb8a4"/>
<path d="M70 56 Q72 42 86 42 Q100 42 102 56 Q88 48 70 56 Z" fill="#161414"/>
<path d="M52 90 Q70 82 84 86 Q100 82 118 90 Z" fill="#b8cce4"/>
<rect x="48" y="64" width="7" height="26" rx="3" fill="#4a5878"/>
</g>
<path d="M16 18 L58 54" stroke="#f8f8fc" stroke-width="3" filter="url(#bl2)"/>
</svg><div class="lb"><svg class="mm" viewBox="0 0 14 14"><rect x="5" y="1" width="4" height="7" rx="2" fill="#d0202a"/><path d="M3 6.5 Q3 10 7 10 Q11 10 11 6.5 M7 10 L7 12.5" fill="none" stroke="#d0202a" stroke-width="1.2"/><path d="M1.5 13.5 L12.5 1" stroke="#d0202a" stroke-width="1.3"/></svg>高見</div></div>
<div class="abs" style="left:1459px;top:53px;width:164px;height:94px;background:linear-gradient(90deg,#78c040,#c8e070 50%,#e8ea80)"></div>
<div class="th" style="left:1461px"><svg width="160" height="90" viewBox="0 0 160 90" style="position:absolute;left:0;top:0"><rect width="160" height="90" fill="#c4a878"/>
<g filter="url(#bl)">
<rect x="0" y="0" width="56" height="90" fill="#b89e76"/>
<rect x="120" y="0" width="40" height="62" fill="#c8ac7c"/>
<path d="M0 40 L42 38 L46 68 L0 70 Z" fill="#a88c68"/>
<path d="M0 62 L36 60 L40 90 L0 90 Z" fill="#8c8e8a"/>
<rect x="128" y="62" width="32" height="28" fill="#7c7e7a"/>
<path d="M30 90 L36 62 Q56 48 86 50 Q118 48 134 62 L140 90 Z" fill="#8e929c"/>
<path d="M54 90 L52 20 Q52 0 86 0 Q120 0 120 20 L122 90 L104 90 L100 40 L72 40 L70 90 Z" fill="#6e4a34"/>
<path d="M66 0 L104 0 L102 32 Q96 50 85 50 Q72 50 68 32 Z" fill="#dab49a"/>
<path d="M72 44 L100 44 L102 90 L70 90 Z" fill="#9a9ea8"/>
</g>
<path d="M70 22 Q72 50 78 90 M104 34 Q100 62 94 90" fill="none" stroke="#eeeeee" stroke-width="0.7"/>
</svg><div class="lb">王福瀛</div></div>
<svg class="abs" style="left:1648px;top:83px" width="34" height="34" viewBox="0 0 34 34"><circle cx="17" cy="17" r="14.8" fill="#1a64ec" stroke="#fff" stroke-width="2.6"/><path d="M14 10 L21 17 L14 24" fill="none" stroke="#fff" stroke-width="2.2"/></svg>
<div class="abs" style="left:1820px;top:51px;width:30px;height:30px;background:#232428;border-radius:4px"></div>
<svg class="abs" style="left:1826px;top:59px" width="18" height="14" viewBox="0 0 18 14"><path d="M1 1 L9 1 L9 5 L17 5 L17 13 L1 13 Z" fill="#b0b0b4"/><rect x="10" y="1" width="7" height="3" fill="#7a7a80"/></svg>
<div class="abs" style="left:1851px;top:51px;width:30px;height:30px;background:#232428;border-radius:4px"></div>
<svg class="abs" style="left:1860px;top:59px" width="14" height="14" viewBox="0 0 14 14"><path d="M1 5 L1 1 L5 1 M9 1 L13 1 L13 5 M13 9 L13 13 L9 13 M5 13 L1 13 L1 9" fill="none" stroke="#e0e0e4" stroke-width="1.1"/></svg>

<div class="abs" style="left:388px;top:164px;width:27px;height:27px;background:#141416;border-radius:5px"></div>
<svg class="abs" style="left:393px;top:170px" width="16" height="16" viewBox="0 0 16 16"><circle cx="8" cy="8" r="6.8" fill="none" stroke="#b8b8bc" stroke-width="1.1"/><rect x="7.3" y="7" width="1.5" height="5" fill="#b8b8bc"/><circle cx="8" cy="4.8" r="0.9" fill="#b8b8bc"/></svg>
<div class="abs" style="left:420px;top:164px;width:27px;height:27px;background:#141416;border-radius:5px"></div>
<svg class="abs" style="left:427px;top:170px" width="14" height="15" viewBox="0 0 14 15"><path d="M7 0.5 L13 2.5 L13 7 Q13 12 7 14.5 Q1 12 1 7 L1 2.5 Z" fill="#2cd14a"/><path d="M4 7.5 L6.2 9.7 L10 5.5" fill="none" stroke="#111" stroke-width="1.6"/></svg>
<div class="abs" style="left:453px;top:165px;width:167px;height:26px;background:#15161c;border-radius:5px"></div>
<svg class="abs" style="left:463px;top:170px" width="15" height="15" viewBox="0 0 15 15"><circle cx="7.5" cy="7.5" r="7" fill="#e0e0e4"/><circle cx="7.5" cy="7.5" r="3.3" fill="#e0202e"/></svg>
<div class="abs" style="left:487px;top:170px;font-size:13px;color:#f0f0f0">Recording...</div>
<div class="abs" style="left:575px;top:173px;width:3px;height:9px;background:#f0f0f0"></div>
<div class="abs" style="left:580px;top:173px;width:3px;height:9px;background:#f0f0f0"></div>
<div class="abs" style="left:602px;top:174px;width:9px;height:8px;background:#f0f0f0"></div>


<div class="tb" style="left:372px;top:1169px;width:100px">Mute</div>
<svg class="abs" style="left:415px;top:1141px" width="15" height="22" viewBox="0 0 15 22"><rect x="3.5" y="0" width="8" height="14" rx="4" fill="#bdbdc0"/><path d="M1 10 Q1 17 7.5 17 Q14 17 14 10" fill="none" stroke="#bdbdc0" stroke-width="1.6"/><path d="M7.5 17 L7.5 20.5 M3.5 21 L11.5 21" stroke="#bdbdc0" stroke-width="1.6"/></svg>
<svg class="abs" style="left:450px;top:1149px" width="10" height="7" viewBox="0 0 10 7"><path d="M1 5.5 L5 1.5 L9 5.5" fill="none" stroke="#bdbdc0" stroke-width="1.4"/></svg>
<div class="tb" style="left:461px;top:1169px;width:100px">Stop Video</div>
<svg class="abs" style="left:500px;top:1144px" width="25" height="15" viewBox="0 0 25 15"><rect x="0" y="0" width="18" height="15" rx="3" fill="#bdbdc0"/><path d="M19 5 L24.5 1 L24.5 14 L19 10 Z" fill="#bdbdc0"/></svg>
<svg class="abs" style="left:538px;top:1149px" width="10" height="7" viewBox="0 0 10 7"><path d="M1 5.5 L5 1.5 L9 5.5" fill="none" stroke="#bdbdc0" stroke-width="1.4"/></svg>
<div class="tb" style="left:890px;top:1169px;width:100px">Security</div>
<svg class="abs" style="left:931px;top:1142px" width="19" height="21" viewBox="0 0 19 21"><path d="M9.5 1 L18 4 L18 10 Q18 17 9.5 20 Q1 17 1 10 L1 4 Z" fill="#151515" stroke="#bdbdc0" stroke-width="1.5"/><path d="M9.5 1 L1 4 L1 10.5 L9.5 10.5 Z M9.5 10.5 L18 10.5 Q17.5 17 9.5 20 Z" fill="#bdbdc0"/></svg>
<div class="tb" style="left:973px;top:1169px;width:100px">Participants</div>
<svg class="abs" style="left:1011px;top:1143px" width="26" height="19" viewBox="0 0 26 19"><circle cx="8.5" cy="4.5" r="4.2" fill="#bdbdc0"/><circle cx="17.5" cy="6.5" r="3.6" fill="#bdbdc0"/><path d="M0.5 17 Q0.5 11 8.5 11 Q16 11 16 17 L16 18.5 L0.5 18.5 Z" fill="#bdbdc0"/><path d="M17 12 Q25 12 25 17 L25 18.5 L17 18.5 Z" fill="#bdbdc0"/></svg>
<div class="abs" style="left:1038px;top:1144px;font-size:13px;color:#c4c4c8">10</div>
<div class="tb" style="left:1056px;top:1169px;width:100px">Chat</div>
<svg class="abs" style="left:1097px;top:1143px" width="21" height="19" viewBox="0 0 21 19"><rect x="0" y="0" width="21" height="14" rx="4" fill="#bdbdc0"/><path d="M4 13 L4.5 18.5 L10 13 Z" fill="#bdbdc0"/></svg>
<div class="tb" style="left:1143px;top:1169px;width:100px;color:#2ed150">Share Screen</div>
<svg class="abs" style="left:1182px;top:1143px" width="24" height="18" viewBox="0 0 24 18"><rect x="0" y="0" width="24" height="18" rx="3" fill="#2ed150"/><path d="M12 14 L12 4.5 M8 8 L12 4 L16 8" fill="none" stroke="#111" stroke-width="2"/></svg>
<svg class="abs" style="left:1223px;top:1149px" width="10" height="7" viewBox="0 0 10 7"><path d="M1 5.5 L5 1.5 L9 5.5" fill="none" stroke="#2ed150" stroke-width="1.5"/></svg>
<div class="tb" style="left:1236px;top:1169px;width:150px">Pause/Stop Recording</div>
<svg class="abs" style="left:1288px;top:1142px" width="48" height="20" viewBox="0 0 48 20"><rect x="0" y="0" width="20" height="20" rx="3" fill="#bdbdc0"/><rect x="6" y="5" width="2.5" height="10" fill="#1a1a1a"/><rect x="11.5" y="5" width="2.5" height="10" fill="#1a1a1a"/><rect x="28" y="0" width="20" height="20" rx="3" fill="#bdbdc0"/><rect x="33.5" y="5.5" width="9" height="9" fill="#1a1a1a"/></svg>
<div class="tb" style="left:1373px;top:1169px;width:100px">Reactions</div>
<svg class="abs" style="left:1414px;top:1140px" width="23" height="22" viewBox="0 0 23 22"><circle cx="10" cy="12" r="9.5" fill="#bdbdc0"/><circle cx="7" cy="10" r="1.4" fill="#1a1a1a"/><circle cx="13" cy="10" r="1.4" fill="#1a1a1a"/><path d="M5.5 13 Q10 18 14.5 13" fill="none" stroke="#1a1a1a" stroke-width="1.5"/><path d="M18.5 0.5 L18.5 7 M15.3 3.8 L21.7 3.8" stroke="#bdbdc0" stroke-width="1.5"/></svg>
<div class="abs" style="left:1808px;top:1148px;width:64px;height:27px;background:#b5121f;border-radius:7px;color:#fff;font-weight:bold;font-size:13px;text-align:center;line-height:27px">End</div>

<!-- PAGES WINDOW -->
<div class="abs" id="pages" style="left:622px;top:197px;width:1016px;height:896px;background:#fff">
 <div class="abs" style="left:0;top:0;width:1016px;height:68px;background:linear-gradient(#e8e7e9,#d5d4d6);border-bottom:1px solid #c4c4c4"></div>
 <div class="abs" style="left:745px;top:68px;width:271px;height:828px;background:#f6f5f8;border-left:1px solid #b8b8b8"></div>
</div>

<div class="tl" style="left:630px;top:202px;background:#7e7e80;border-color:#747476"></div>
<div class="tl" style="left:650px;top:202px;background:#7e7e80;border-color:#747476"></div>
<div class="tl" style="left:670px;top:202px;background:#7e7e80;border-color:#747476"></div>
<div class="abs" style="left:1067px;top:202px;width:11px;height:13px;background:#fbfaf6;box-shadow:0 0 0 0.5px #c8c8c8"><div class="abs" style="left:3px;top:2px;width:5px;height:5px;background:#e8a040;border-radius:1px"></div></div>
<div class="abs" style="left:1084px;top:200px;font-size:13px;color:#3a3a3a">未命名 4 — 已编辑</div>
<svg class="abs" style="left:1201px;top:206px" width="9" height="6" viewBox="0 0 9 6"><path d="M1 1 L4.5 4.5 L8 1" fill="none" stroke="#666" stroke-width="1.2"/></svg>
<div class="pb" style="left:633px;width:44px"></div>
<svg class="abs" style="left:641px;top:227px" width="17" height="13" viewBox="0 0 17 13"><rect x="0.6" y="0.6" width="15.8" height="11.8" fill="none" stroke="#555" stroke-width="1.2"/><rect x="1" y="4" width="4" height="8.5" fill="#8a8a8a"/><path d="M1 4 L16 4" stroke="#555" stroke-width="1.2"/></svg>
<svg class="abs" style="left:662px;top:230px" width="9" height="6" viewBox="0 0 9 6"><path d="M1 1 L4.5 4.5 L8 1" fill="none" stroke="#555" stroke-width="1.2"/></svg>
<div class="pl" style="left:623px">显示</div>
<div class="pb" style="left:687px;width:51px"></div>
<div class="abs" style="left:693px;top:226px;font-size:12px;color:#333">125%</div>
<svg class="abs" style="left:724px;top:230px" width="9" height="6" viewBox="0 0 9 6"><path d="M1 1 L4.5 4.5 L8 1" fill="none" stroke="#555" stroke-width="1.2"/></svg>
<div class="pl" style="left:680px">缩放</div>
<div class="pb" style="left:748px;width:42px"></div>
<svg class="abs" style="left:761px;top:227px" width="14" height="14" viewBox="0 0 14 14"><path d="M7 1 L7 13 M1 7 L13 7" stroke="#888" stroke-width="1.4"/></svg>
<div class="pl" style="left:738px">添加页面</div>
<div class="pb" style="left:897px;width:44px"></div>
<div class="abs" style="left:908px;top:224px;font-size:15px;color:#888;font-weight:bold">&para;</div>
<svg class="abs" style="left:927px;top:230px" width="9" height="6" viewBox="0 0 9 6"><path d="M1 1 L4.5 4.5 L8 1" fill="none" stroke="#555" stroke-width="1.2"/></svg>
<div class="pl" style="left:888px">插入</div>
<div class="pb" style="left:953px;width:44px"></div>
<svg class="abs" style="left:962px;top:226px" width="22" height="14" viewBox="0 0 22 14"><rect x="3" y="0" width="16" height="14" fill="#f0c830"/><path d="M3 4.5 L19 4.5 M3 9 L19 9" stroke="#fff3b0" stroke-width="1"/><path d="M0 4.5 L3 4.5 M19 4.5 L22 4.5 M0 9 L3 9 M19 9 L22 9" stroke="#f8d8c0" stroke-width="0.6"/></svg>
<div class="pl" style="left:943px">表格</div>
<div class="pb" style="left:1005px;width:44px"></div>
<svg class="abs" style="left:1017px;top:226px" width="19" height="14" viewBox="0 0 19 14"><rect x="0" y="9" width="4" height="5" rx="1" fill="#3a8ee0"/><rect x="5" y="6" width="4" height="8" rx="1" fill="#3a8ee0"/><rect x="10" y="3" width="4" height="11" rx="1" fill="#3a8ee0"/><rect x="15" y="0" width="4" height="14" rx="1" fill="#3a8ee0"/></svg>
<div class="pl" style="left:997px">图表</div>
<div class="pb" style="left:1059px;width:44px"></div>
<svg class="abs" style="left:1074px;top:226px" width="14" height="15" viewBox="0 0 14 15"><path d="M1 1.5 L13 1.5 M7 1.5 L7 14" stroke="#555" stroke-width="1.4"/></svg>
<div class="pl" style="left:1051px">文本</div>
<div class="pb" style="left:1113px;width:44px"></div>
<div class="abs" style="left:1128px;top:226px;width:14px;height:14px;background:#3cc88a;border-radius:2px"></div>
<div class="pl" style="left:1105px">形状</div>
<div class="pb" style="left:1167px;width:44px"></div>
<svg class="abs" style="left:1177px;top:227px" width="17" height="13" viewBox="0 0 17 13"><rect x="0.5" y="0.5" width="16" height="12" fill="#e8f2fc" stroke="#3a8ee0" stroke-width="1"/><path d="M1 12 L6 6 L10 10 L12 8 L16 12 Z" fill="#3a8ee0"/><circle cx="12" cy="4" r="1.6" fill="#3a8ee0"/></svg>
<svg class="abs" style="left:1197px;top:230px" width="9" height="6" viewBox="0 0 9 6"><path d="M1 1 L4.5 4.5 L8 1" fill="none" stroke="#555" stroke-width="1.2"/></svg>
<div class="pl" style="left:1159px">媒体</div>
<div class="pb" style="left:1221px;width:44px"></div>
<svg class="abs" style="left:1235px;top:226px" width="16" height="14" viewBox="0 0 16 14"><rect x="0" y="0" width="16" height="13" rx="1" fill="#f0b828"/><rect x="3" y="3" width="10" height="5" fill="#d89818"/></svg>
<div class="pl" style="left:1213px">批注</div>
<div class="pb" style="left:1372px;width:46px"></div>
<svg class="abs" style="left:1384px;top:224px" width="22" height="18" viewBox="0 0 22 18"><circle cx="9" cy="8" r="7.5" fill="none" stroke="#888" stroke-width="1"/><circle cx="9" cy="6" r="2.6" fill="none" stroke="#888" stroke-width="1"/><path d="M5 13 Q9 9 13 13" fill="none" stroke="#888" stroke-width="1"/><circle cx="16" cy="12" r="4.5" fill="#777"/><path d="M16 9.8 L16 14.2 M13.8 12 L18.2 12" stroke="#fff" stroke-width="1.2"/></svg>
<div class="pl" style="left:1365px">协作</div>
<div class="abs" style="left:1525px;top:221px;width:102px;height:23px;border-radius:5px;background:#fafafa;box-shadow:0 0.5px 1px rgba(0,0,0,0.25);overflow:hidden"><div class="abs" style="left:0;top:0;width:52px;height:23px;background:#6b6b6d"></div></div>
<svg class="abs" style="left:1542px;top:225px" width="17" height="16" viewBox="0 0 17 16"><path d="M9.5 0.8 L11 2.2 L10 3.2 L13.8 7 L15 11 L13.5 13.5 L12 12 L9 11.5 L6.2 8.8 L8.6 6.4 L8.2 2.2 Z" fill="#fff"/><path d="M6.8 9 L2 13.8" stroke="#fff" stroke-width="2.8" stroke-linecap="round"/><circle cx="2.2" cy="13.6" r="0.7" fill="#6b6b6d"/></svg>
<svg class="abs" style="left:1595px;top:225px" width="13" height="16" viewBox="0 0 13 16"><rect x="0.7" y="0.7" width="11.6" height="14.6" rx="1" fill="#fff" stroke="#444" stroke-width="1.3"/><path d="M3 4 L10 4 M3 6.8 L10 6.8 M3 9.6 L10 9.6 M3 12.4 L10 12.4" stroke="#444" stroke-width="0.9"/></svg>
<div class="pl" style="left:1521px;color:#3a3a3a">格式</div>
<div class="pl" style="left:1572px;color:#3a3a3a">文稿</div>

<!-- document -->
<div class="abs" style="left:693px;top:310px;width:605px;height:18px;border:1px solid #dadada"></div>
<div class="abs" style="left:894px;top:310px;width:1px;height:18px;background:#b8b8b8"></div>
<div class="abs" style="left:1095px;top:310px;width:1px;height:18px;background:#b8b8b8"></div>
<svg class="abs" style="left:1178px;top:316px" width="10" height="19" viewBox="0 0 10 19"><path d="M2 1 Q5 1 5 3 Q5 1 8 1 M5 3 L5 16 M2 18 Q5 18 5 16 Q5 18 8 18 M3 9.5 L7 9.5" fill="none" stroke="#111" stroke-width="1.3"/></svg>
<div class="abs" style="left:692px;top:339px;font-size:22.6px;font-weight:bold;color:#111">Risset Rhythm</div>
<div class="abs" style="left:693px;top:381px;width:640px;font-size:14px;letter-spacing:-0.18px;line-height:20px;color:#1a1a1a;white-space:nowrap;-webkit-text-stroke:0.12px #1a1a1a">オリジナルオーディオ素材の特徴分析：バスドラムのピッチが昇て、音色が変わります。ghost<br>noteの音量調整して、リズムを変換します。ハイハットは固定速度を保っていますが、強めの部<br>分の位置が絶えず移動しています。変換されている律動と上昇し続けるピッチが組み合わさって<br>リズムが無限に加速する錯覚があります。</div>
<div class="abs" style="left:908px;top:1055px;width:173px;height:26px;border-radius:4px;background:#fff;box-shadow:0 0 0 0.5px rgba(0,0,0,0.15),0 1px 2px rgba(0,0,0,0.12)"></div>
<div class="abs" style="left:967px;top:1061px;font-size:12px;color:#999">字数：</div>
<div class="abs" style="left:1004px;top:1061px;font-size:12px;color:#111;font-weight:bold">140</div>

<!-- sidebar -->
<div class="abs" style="left:1368px;top:265px;width:270px;height:27px;background:#f7f6f9;border-bottom:1px solid #d2d2d4"></div>
<div class="abs" style="left:1368px;top:271px;width:270px;text-align:center;font-size:12px;color:#777">文本</div>
<div class="abs" style="left:1368px;top:293px;width:270px;height:67px;background:#fdfdfe;border-bottom:1px solid #dcdbde"></div>
<div class="abs" style="left:1386px;top:321px;font-size:14px;color:#111">正文</div>
<svg class="abs" style="left:1606px;top:323px" width="11" height="7" viewBox="0 0 11 7"><path d="M0 0 L11 0 L5.5 7 Z" fill="#888"/></svg>
<div class="abs" style="left:1395px;top:376px;width:212px;height:21px;border-radius:5px;background:#fcfcfd;box-shadow:0 0 0 0.5px rgba(0,0,0,0.12),0 0.5px 1px rgba(0,0,0,0.15);overflow:hidden">
 <div class="abs" style="left:0;top:0;width:72px;height:21px;background:#7b7b7d"></div>
 <div class="abs" style="left:142px;top:0;width:1px;height:21px;background:#e2e2e4"></div>
 <div class="abs" style="left:0;top:3px;width:72px;text-align:center;font-size:11px;color:#fff;-webkit-text-stroke:0.25px #fff">样式</div>
 <div class="abs" style="left:72px;top:3px;width:70px;text-align:center;font-size:11px;color:#333;-webkit-text-stroke:0.25px #333">布局</div>
 <div class="abs" style="left:143px;top:3px;width:69px;text-align:center;font-size:11px;color:#333;-webkit-text-stroke:0.25px #333">更多</div>
</div>
<div class="sep" style="top:414px"></div>
<div class="sl" style="left:1384px;top:432px">字体</div>
<div class="pop" style="left:1385px;top:460px;width:236px;height:19px"><div class="stp"></div></div>
<div class="abs" style="left:1393px;top:462px;font-size:12px;color:#222">Helvetica Neue</div>
<svg class="abs" style="left:1608px;top:463px" width="9" height="13" viewBox="0 0 9 13"><path d="M1.5 5 L4.5 2 L7.5 5 M1.5 8 L4.5 11 L7.5 8" fill="none" stroke="#fff" stroke-width="1.2"/></svg>
<div class="pop" style="left:1385px;top:493px;width:159px;height:19px"><div class="stp"></div></div>
<div class="abs" style="left:1393px;top:495px;font-size:12px;color:#222">常规体</div>
<svg class="abs" style="left:1531px;top:496px" width="9" height="13" viewBox="0 0 9 13"><path d="M1.5 5 L4.5 2 L7.5 5 M1.5 8 L4.5 11 L7.5 8" fill="none" stroke="#fff" stroke-width="1.2"/></svg>
<div class="pop" style="left:1556px;top:493px;width:65px;height:19px"><div class="stp"></div></div>
<div class="abs" style="left:1560px;top:495px;font-size:12px;color:#222">11</div>
<svg class="abs" style="left:1608px;top:499px" width="9" height="6" viewBox="0 0 9 6"><path d="M1 1 L4.5 4.5 L8 1" fill="none" stroke="#fff" stroke-width="1.2"/></svg>
<div class="pop" style="left:1385px;top:526px;width:159px;height:19px"></div>
<div class="abs" style="left:1416px;top:527px;width:1px;height:17px;background:#e4e4e4"></div>
<div class="abs" style="left:1448px;top:527px;width:1px;height:17px;background:#e4e4e4"></div>
<div class="abs" style="left:1481px;top:527px;width:1px;height:17px;background:#e4e4e4"></div>
<div class="abs" style="left:1512px;top:527px;width:1px;height:17px;background:#e4e4e4"></div>
<div class="abs" style="left:1398px;top:533px;width:4px;height:4px;border-radius:50%;background:#222"></div>
<div class="abs" style="left:1427px;top:528px;font-size:12px;font-weight:bold;color:#222">B</div>
<div class="abs" style="left:1459px;top:528px;font-size:12px;color:#222;text-decoration:underline">U</div>
<div class="abs" style="left:1491px;top:527px;font-size:12px;color:#222">U</div>
<svg class="abs" style="left:1489px;top:541px" width="12" height="3" viewBox="0 0 12 3"><path d="M0 1 Q1.5 3 3 1 Q4.5 -1 6 1 Q7.5 3 9 1 Q10.5 -1 12 1" fill="none" stroke="#333" stroke-width="0.8"/></svg>
<svg class="abs" style="left:1519px;top:528px" width="14" height="14" viewBox="0 0 14 14"><circle cx="7" cy="7" r="3.5" fill="none" stroke="#222" stroke-width="2.2"/><path d="M7 0.5 L7 3 M7 11 L7 13.5 M0.5 7 L3 7 M11 7 L13.5 7 M2.4 2.4 L4.2 4.2 M9.8 9.8 L11.6 11.6 M2.4 11.6 L4.2 9.8 M9.8 4.2 L11.6 2.4" stroke="#222" stroke-width="1.8"/></svg>
<svg class="abs" style="left:1534px;top:533px" width="9" height="6" viewBox="0 0 9 6"><path d="M1 1 L4.5 4.5 L8 1" fill="none" stroke="#333" stroke-width="1.2"/></svg>
<div class="pop" style="left:1556px;top:526px;width:65px;height:19px;overflow:hidden"><div class="abs" style="left:0;top:0;width:45px;height:19px;background:#000"></div></div>
<svg class="abs" style="left:1603px;top:528px" width="15" height="15" viewBox="0 0 15 15"><circle cx="7.5" cy="7.5" r="5.6" fill="none" stroke="url(#cw)" stroke-width="2"/><defs><linearGradient id="cw" x1="0" y1="0" x2="1" y2="1"><stop offset="0" stop-color="#ff6060"/><stop offset="0.35" stop-color="#e0e040"/><stop offset="0.65" stop-color="#40d080"/><stop offset="1" stop-color="#8060ff"/></linearGradient></defs></svg>
<div class="sl" style="left:1384px;top:561px">字符样式</div>
<div class="pop" style="left:1447px;top:559px;width:174px;height:19px"></div>
<div class="abs" style="left:1456px;top:561px;font-size:12px;color:#222">无</div>
<svg class="abs" style="left:1605px;top:565px" width="9" height="6" viewBox="0 0 9 6"><path d="M1 1 L4.5 4.5 L8 1" fill="none" stroke="#444" stroke-width="1.2"/></svg>
<div class="sep" style="top:591px"></div>

<div class="sl" style="left:1384px;top:610px">对齐</div>
<div class="pop" style="left:1384px;top:633px;width:237px;height:20px;overflow:hidden">
 <div class="abs" style="left:0;top:0;width:61px;height:20px;background:linear-gradient(#8a8a8c,#747476)"></div>
 <div class="abs" style="left:120px;top:2px;width:1px;height:16px;background:#e4e4e4"></div>
 <div class="abs" style="left:179px;top:2px;width:1px;height:16px;background:#e4e4e4"></div>
</div>
<svg class="abs" style="left:1408px;top:638px" width="12" height="11" viewBox="0 0 12 11"><rect x="0" y="0" width="12" height="11" fill="#c8c8ca"/><path d="M3 2.5 L10 2.5 M3 5.5 L8 5.5 M3 8.5 L10 8.5" stroke="#9a9a9c" stroke-width="1"/></svg>
<svg class="abs" style="left:1468px;top:638px" width="12" height="11" viewBox="0 0 12 11"><rect x="0" y="0" width="12" height="11" fill="#8a8a8c"/><path d="M2 2.5 L10 2.5 M3.5 5.5 L8.5 5.5 M2 8.5 L10 8.5" stroke="#fff" stroke-width="1"/></svg>
<svg class="abs" style="left:1527px;top:638px" width="12" height="11" viewBox="0 0 12 11"><rect x="0" y="0" width="12" height="11" fill="#8a8a8c"/><path d="M0 2.5 L8 2.5 M3 5.5 L8 5.5 M0 8.5 L8 8.5" stroke="#fff" stroke-width="1"/></svg>
<div class="abs" style="left:1587px;top:638px;width:11px;height:11px;background:#8a8a8c"></div>
<div class="pop" style="left:1384px;top:663px;width:237px;height:20px"><div class="abs" style="left:119px;top:2px;width:1px;height:16px;background:#e4e4e4"></div></div>
<svg class="abs" style="left:1435px;top:668px" width="18" height="10" viewBox="0 0 18 10"><path d="M0 5 L4 2 L4 8 Z" fill="#8a8a8c"/><rect x="6" y="0" width="11" height="10" fill="#d0d0d2"/><rect x="6" y="0" width="3" height="10" fill="#b0b0b2"/></svg>
<svg class="abs" style="left:1554px;top:668px" width="18" height="10" viewBox="0 0 18 10"><rect x="0" y="0" width="11" height="10" fill="#8a8a8c"/><path d="M13 2 L17 5 L13 8 Z" fill="#555"/></svg>
<div class="pop" style="left:1384px;top:693px;width:237px;height:20px;box-shadow:0 0 0 0.5px rgba(0,0,0,0.08)">
 <div class="abs" style="left:79px;top:2px;width:1px;height:16px;background:#ececec"></div>
 <div class="abs" style="left:158px;top:2px;width:1px;height:16px;background:#ececec"></div>
</div>
<svg class="abs" style="left:1417px;top:697px" width="13" height="12" viewBox="0 0 13 12"><path d="M1 0.5 L12 0.5 M6.5 2 L6.5 12 M3.5 5 L6.5 2 L9.5 5" fill="none" stroke="#b8b8ba" stroke-width="1"/></svg>
<svg class="abs" style="left:1496px;top:696px" width="13" height="14" viewBox="0 0 13 14"><path d="M1 7 L12 7 M6.5 0 L6.5 14 M3.5 1.5 L6.5 4.5 L9.5 1.5 M3.5 12.5 L6.5 9.5 L9.5 12.5" fill="none" stroke="#b8b8ba" stroke-width="1"/></svg>
<svg class="abs" style="left:1575px;top:697px" width="13" height="12" viewBox="0 0 13 12"><path d="M1 11.5 L12 11.5 M6.5 0 L6.5 10 M3.5 7 L6.5 10 L9.5 7" fill="none" stroke="#b8b8ba" stroke-width="1"/></svg>
<div class="sep" style="top:728px"></div>
<svg class="abs" style="left:1384px;top:751px" width="7" height="9" viewBox="0 0 7 9"><path d="M0 0 L7 4.5 L0 9 Z" fill="#8a8a8a"/></svg>
<div class="sl" style="left:1399px;top:748px">间距</div>
<div class="pop" style="left:1497px;top:745px;width:124px;height:19px"><div class="stp"></div></div>
<div class="abs" style="left:1505px;top:747px;font-size:12px;color:#222">1.0 - 一倍</div>
<svg class="abs" style="left:1608px;top:748px" width="9" height="13" viewBox="0 0 9 13"><path d="M1.5 5 L4.5 2 L7.5 5 M1.5 8 L4.5 11 L7.5 8" fill="none" stroke="#fff" stroke-width="1.2"/></svg>
<div class="sep" style="top:776px"></div>
<svg class="abs" style="left:1384px;top:799px" width="7" height="9" viewBox="0 0 7 9"><path d="M0 0 L7 4.5 L0 9 Z" fill="#8a8a8a"/></svg>
<div class="sl" style="left:1399px;top:796px">项目符号与列表</div>
<div class="pop" style="left:1497px;top:794px;width:124px;height:19px"></div>
<div class="abs" style="left:1507px;top:796px;font-size:12px;color:#222">无</div>
<svg class="abs" style="left:1605px;top:800px" width="9" height="6" viewBox="0 0 9 6"><path d="M1 1 L4.5 4.5 L8 1" fill="none" stroke="#444" stroke-width="1.2"/></svg>
<div class="sep" style="top:827px"></div>

</body>
</html>
